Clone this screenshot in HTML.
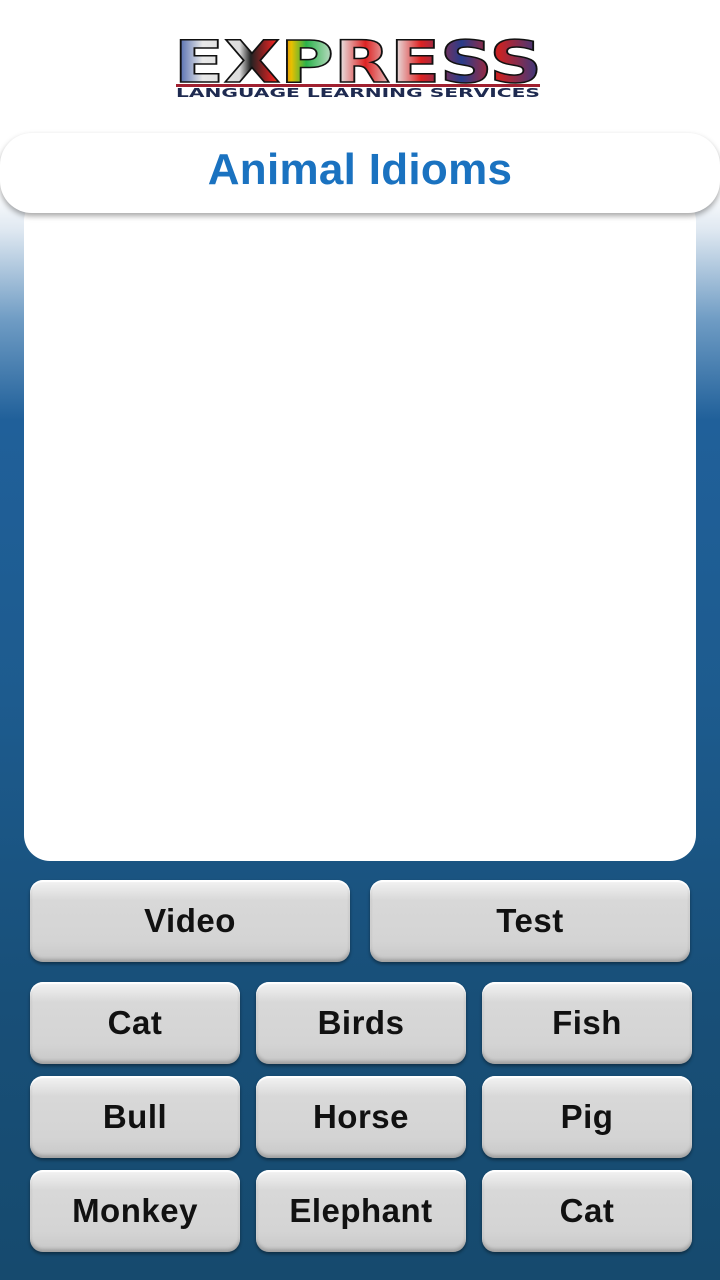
<!DOCTYPE html>
<html><head><meta charset="utf-8"><style>
html,body{margin:0;padding:0}
body{width:720px;height:1280px;position:relative;overflow:hidden;font-family:"Liberation Sans",sans-serif;
background:linear-gradient(to bottom,#fff 0px,#fff 190px,#dfe8f1 230px,#6f9cc4 320px,#20609a 420px,#1d5b8e 700px,#184f78 1000px,#164a6e 1280px);}
svg.logo{position:absolute;left:0;top:0}
.head{position:absolute;left:0;top:133px;width:720px;height:80px;background:#fff;border-radius:32px;box-shadow:0 3px 6px rgba(0,0,0,.35);z-index:2;text-align:center;line-height:74px;font-size:44px;font-weight:bold;color:#1a72c0;letter-spacing:0.3px}
.panel{position:absolute;left:24px;top:195px;width:672px;height:666px;background:#fff;border-radius:26px}
.b{position:absolute;height:82px;border-radius:13px;background:linear-gradient(#f4f4f4,#d8d8d8 25%,#d4d4d4 75%,#c8c8c8);box-shadow:inset 0 2px 1px #fff,inset 0 -3px 3px rgba(0,0,0,.2),0 2px 3px rgba(0,0,0,.4);text-align:center;line-height:82px;font-size:33px;font-weight:bold;color:#111;letter-spacing:0.5px}
</style></head><body>
<svg class="logo" width="720" height="110">
<defs><linearGradient id="g" x1="173" x2="543" gradientUnits="userSpaceOnUse">
<stop offset="0" stop-color="#2a4aa0"/><stop offset=".08" stop-color="#e8e8e8"/><stop offset=".18" stop-color="#ddd"/>
<stop offset=".21" stop-color="#222"/><stop offset=".27" stop-color="#d22"/><stop offset=".32" stop-color="#e8c000"/>
<stop offset=".36" stop-color="#2ab24a"/><stop offset=".45" stop-color="#e8e8e8"/><stop offset=".52" stop-color="#d22"/>
<stop offset=".6" stop-color="#e8e8e8"/><stop offset=".67" stop-color="#d22"/><stop offset=".78" stop-color="#283c8a"/>
<stop offset=".88" stop-color="#c22"/><stop offset="1" stop-color="#283c8a"/></linearGradient></defs>
<text x="174" y="82" textLength="368" lengthAdjust="spacingAndGlyphs" font-family="DejaVu Sans" font-weight="bold" font-size="58" fill="url(#g)" stroke="#111" stroke-width="1.5">EXPRESS</text>
<rect x="176" y="84" width="364" height="3" fill="#a02030"/>
<text x="176" y="97" textLength="364" lengthAdjust="spacingAndGlyphs" font-family="DejaVu Sans" font-weight="bold" font-size="12.5" fill="#1e2a50">LANGUAGE LEARNING SERVICES</text>
</svg>
<div class="head">Animal Idioms</div>
<div class="panel"></div>
<div class="b" style="left:30px;top:880px;width:320px">Video</div>
<div class="b" style="left:370px;top:880px;width:320px">Test</div>
<div class="b" style="left:30px;top:982px;width:210px">Cat</div>
<div class="b" style="left:256px;top:982px;width:210px">Birds</div>
<div class="b" style="left:482px;top:982px;width:210px">Fish</div>
<div class="b" style="left:30px;top:1076px;width:210px">Bull</div>
<div class="b" style="left:256px;top:1076px;width:210px">Horse</div>
<div class="b" style="left:482px;top:1076px;width:210px">Pig</div>
<div class="b" style="left:30px;top:1170px;width:210px">Monkey</div>
<div class="b" style="left:256px;top:1170px;width:210px">Elephant</div>
<div class="b" style="left:482px;top:1170px;width:210px">Cat</div>
</body></html>
